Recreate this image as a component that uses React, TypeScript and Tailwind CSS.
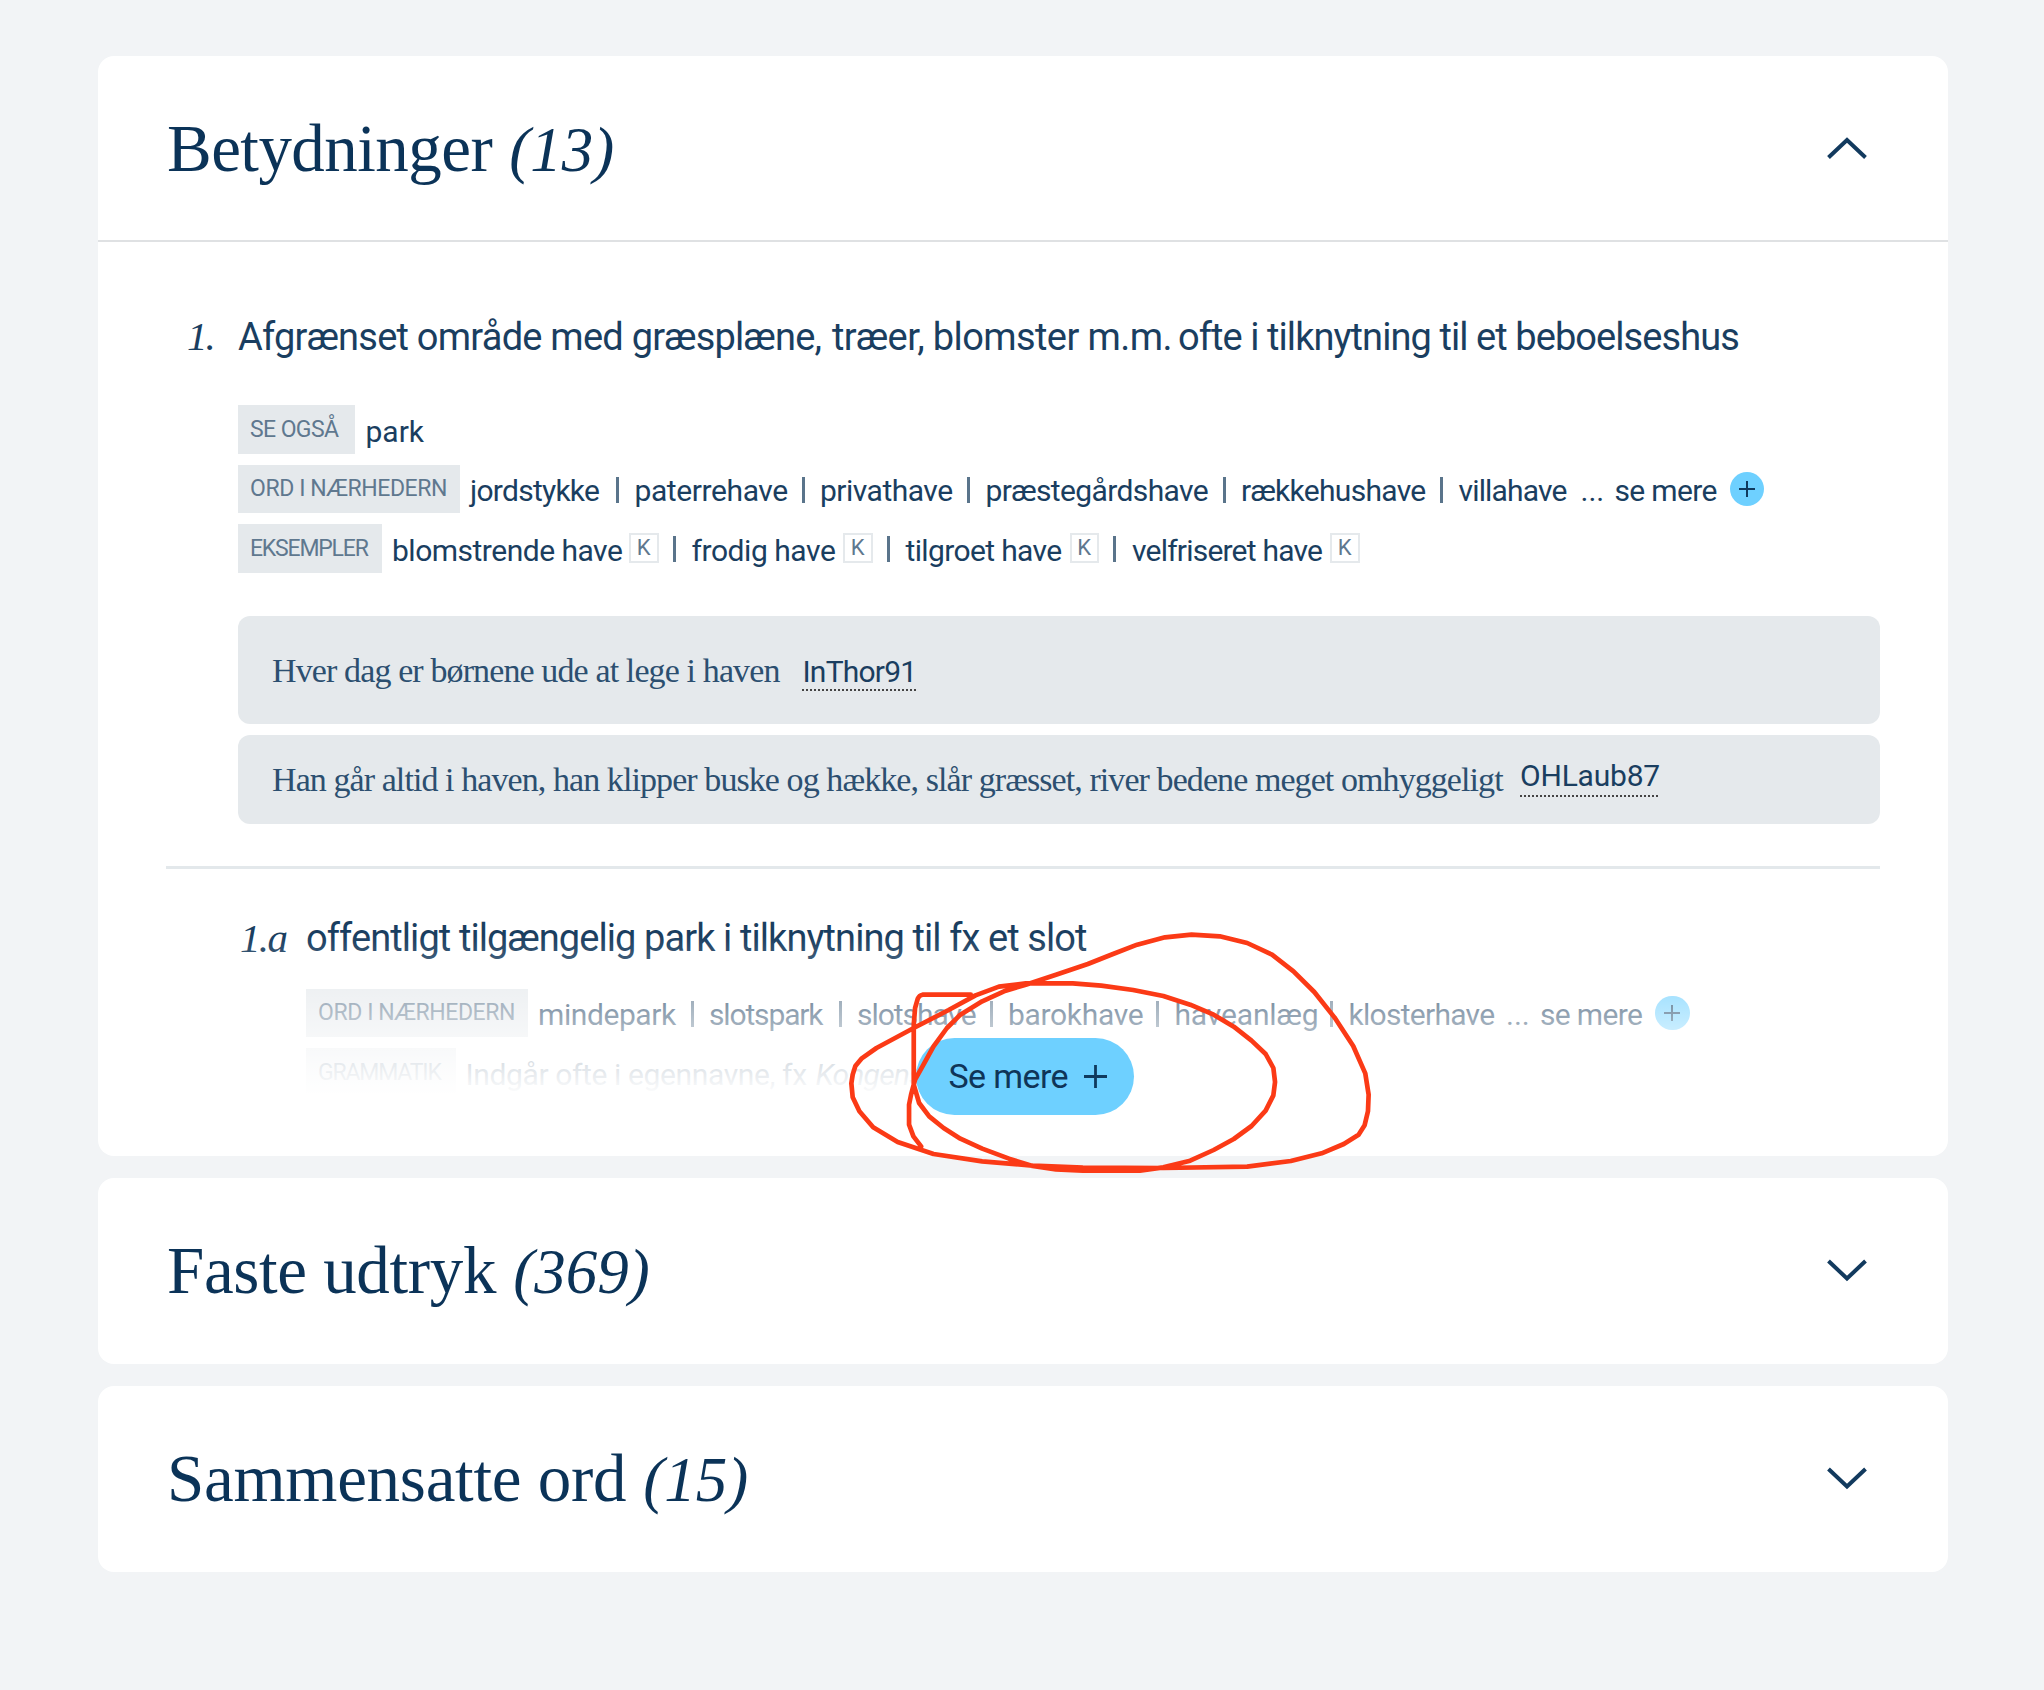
import type { ReactNode } from "react";

type Word = { text: string; cls: string };

const nearby: Word[] = [
  { text: "jordstykke", cls: "w-[130px] tracking-[-0.74px]" },
  { text: "paterrehave", cls: "w-[151px] tracking-[-0.4px]" },
  { text: "privathave", cls: "w-[131px] tracking-[-0.5px]" },
  { text: "præstegårdshave", cls: "w-[221px] tracking-[-0.62px]" },
  { text: "rækkehushave", cls: "w-[183px] tracking-[-0.7px]" },
  { text: "villahave", cls: "w-[108px] tracking-[-0.84px]" },
];

const examples: Word[] = [
  { text: "blomstrende have", cls: "w-[229px] tracking-[-0.5px]" },
  { text: "frodig have", cls: "w-[143.5px] tracking-[-0.45px]" },
  { text: "tilgroet have", cls: "w-[156px] tracking-[-0.63px]" },
  { text: "velfriseret have", cls: "w-[190px] tracking-[-0.79px]" },
];

const parks: Word[] = [
  { text: "mindepark", cls: "w-[137px] tracking-[-0.42px]" },
  { text: "slotspark", cls: "w-[114px] tracking-[-1.15px]" },
  { text: "slotshave", cls: "w-[117px] tracking-[-1.05px]" },
  { text: "barokhave", cls: "w-[132.5px] tracking-[-0.32px]" },
  { text: "haveanlæg", cls: "w-[140px] tracking-[-0.15px]" },
  { text: "klosterhave", cls: "w-[143.5px] tracking-[-0.72px]" },
];

function Chevron({ up = false }: { up?: boolean }) {
  return (
    <svg width="42" height="24" viewBox="0 0 42 24" fill="none" stroke="#123a5e" strokeWidth="4">
      <path d={up ? "M2.5 21.5 L21 4 L39.5 21.5" : "M2.5 3 L21 20.5 L39.5 3"} />
    </svg>
  );
}

function SectionHeader({ title, count, cls, open = false }: { title: string; count: string; cls: string; open?: boolean }) {
  return (
    <div className="flex h-[184.5px] items-center justify-between pr-20 pl-[69px]">
      <h2 className="flex items-baseline gap-[17px] pt-[3px] font-['Liberation_Serif',serif] text-[67px] leading-[80px] whitespace-nowrap text-[#0b3358]">
        <span className={cls}>{title}</span>
        <em className="text-[63px] leading-[80px]">{count}</em>
      </h2>
      <Chevron up={open} />
    </div>
  );
}

function Tag({ children, cls }: { children: ReactNode; cls: string }) {
  return (
    <span className={`flex h-full shrink-0 items-center bg-[#e5e9ec] pt-px text-[23px] text-[#5f788f] ${cls}`}>{children}</span>
  );
}

function Row({ children }: { children: ReactNode }) {
  return <div className="flex h-[48.5px] items-center text-[30px] leading-[44px] whitespace-nowrap">{children}</div>;
}

function Term({ word }: { word: Word }) {
  return <span className={`mt-[5px] shrink-0 ${word.cls}`}>{word.text}</span>;
}

function Bar({ cls }: { cls: string }) {
  return (
    <span className={`flex shrink-0 ${cls}`}>
      <span className="mt-0.5 h-[26px] w-[3px] bg-[#5a748b]" />
    </span>
  );
}

function CategoryBox() {
  return (
    <span className="ml-2 flex h-[30px] w-[29.5px] shrink-0 items-center justify-center border-2 border-[#e5e9ec] text-[22px] text-[#5f788f]">
      K
    </span>
  );
}

function Plus({ size, stroke }: { size: number; stroke: number }) {
  return (
    <svg width={size} height={size} viewBox={`0 0 ${size} ${size}`} stroke="#0f3a5e" strokeWidth={stroke}>
      <path d={`M0 ${size / 2} H${size} M${size / 2} 0 V${size}`} />
    </svg>
  );
}

function WordList({ words, barCls }: { words: Word[]; barCls: string }) {
  return (
    <>
      {words.map((word, i) => (
        <span key={word.text} className="flex shrink-0 items-center">
          {i > 0 && <Bar cls={barCls} />}
          <Term word={word} />
        </span>
      ))}
      <span className="mt-[5px] ml-[14px] w-[21px] shrink-0">...</span>
      <span className="mt-[5px] ml-[13px] w-[101px] shrink-0 tracking-[-0.66px]">se mere</span>
      <span className="ml-[14px] flex size-[34.5px] shrink-0 items-center justify-center rounded-full bg-[#6ed0ff]">
        <Plus size={16} stroke={2} />
      </span>
    </>
  );
}

function Annotation() {
  return (
    <svg
      className="pointer-events-none absolute top-[872px] left-[750px] z-20 overflow-visible"
      width="526"
      height="246"
      viewBox="0 0 1568 738"
      preserveAspectRatio="none"
      fill="none"
      stroke="#fb3a16"
      strokeWidth="14"
      strokeLinejoin="round"
      strokeLinecap="round"
    >
      <path d="M366 200 L222 200 Q212 202 208 212 L200 240 L196 290 L196 470 L212 525 L242 565 L285 600 L335 632 L400 662 L480 692 L550 714 L620 724 L700 728 L870 728 L940 718 L1020 698 L1090 666 L1150 633 L1203 594 L1245 548 L1268 502 L1273 462 L1268 420 L1245 378 L1203 338 L1150 296 L1090 260 L1020 230 L940 204 L850 186 L755 173 L670 166 L530 166 L450 176 L380 202 L300 246 L196 300 L85 360 L40 392 L22 414 L14 440 L10 466 L14 508 L34 550 L75 598 L148 642 L255 678 L400 700 L550 713 L700 719 L940 720 L1190 716 L1320 699 L1412 676 L1478 648 L1522 620 L1540 592 L1550 550 L1552 500 L1542 436 L1506 354 L1450 268 L1390 192 L1328 130 L1264 80 L1190 45 L1108 25 L1024 20 L945 28 L862 50 L790 78 L715 108 L620 140 L530 170 L465 190 L400 220 L335 260 L295 300 L255 355 L225 410 L200 455 L188 500 L182 530 L182 590 L195 625 L218 655" />
    </svg>
  );
}

export default function App() {
  return (
    <main className="flex h-[1690px] w-[2044px] flex-col gap-[22px] bg-[#f2f4f6] pt-[55.5px] pl-[98px] font-['Roboto',sans-serif] text-[#1a3e60]">
      <section className="relative h-[1100px] w-[1850px] rounded-2xl bg-white">
        <SectionHeader title="Betydninger" count="(13)" cls="tracking-[-0.55px]" open />
        <div className="h-[853px] overflow-hidden border-t-2 border-[#dfe1e3] pt-[70px] pr-[68px] pl-[68px]">
          <div className="flex h-[50px] items-center whitespace-nowrap">
            <em className="ml-[21px] w-[51px] shrink-0 font-['Liberation_Serif',serif] text-[41px] tracking-[-2px]">1.</em>
            <h3 className="flex text-[38px]">
              <span className="w-[594px] tracking-[-0.76px]">Afgrænset område med græsplæne, </span>
              <span className="w-[346px] tracking-[-0.6px]">træer, blomster m.m. </span>
              <span className="tracking-[-0.93px]">ofte i tilknytning til et beboelseshus</span>
            </h3>
          </div>
          <div className="mt-[43px] ml-[72px] flex flex-col gap-[11px]">
            <Row>
              <Tag cls="w-[116.5px] pl-3 tracking-[-0.6px]">SE OGSÅ</Tag>
              <span className="mt-[5px] ml-[11px]">park</span>
            </Row>
            <Row>
              <Tag cls="mr-2.5 w-[222px] pl-3 tracking-[-0.4px]">ORD I NÆRHEDERN</Tag>
              <WordList words={nearby} barCls="w-[34.5px] pl-[16px]" />
            </Row>
            <Row>
              <Tag cls="mr-2.5 w-[144px] pl-3 tracking-[-1.2px]">EKSEMPLER</Tag>
              {examples.map((word, i) => (
                <span key={word.text} className="flex shrink-0 items-center">
                  {i > 0 && <Bar cls="w-[33px] pl-[14px]" />}
                  <Term word={word} />
                  <CategoryBox />
                </span>
              ))}
            </Row>
          </div>
          <div className="mt-[43px] ml-[72px] flex flex-col gap-[10.5px] font-['Liberation_Serif',serif] text-[34px] whitespace-nowrap text-[#2c4f70]">
            <div className="flex h-[108.5px] items-center rounded-xl bg-[#e5e9ec] pl-[34px]">
              <span className="mt-px w-[529.5px] tracking-[-0.88px]">Hver dag er børnene ude at lege i haven</span>
              <a className="mt-[7px] w-[114px] border-b-2 border-dotted border-[#444] pl-px font-['Roboto',sans-serif] text-[30px] leading-[34px] tracking-[-0.8px] text-[#1a3e60]">
                InThor91
              </a>
            </div>
            <div className="flex h-[89px] items-center rounded-xl bg-[#e5e9ec] pl-[34px]">
              <span className="mt-px w-[1248px] tracking-[-0.92px]">
                Han går altid i haven, han klipper buske og hække, slår græsset, river bedene meget omhyggeligt
              </span>
              <a className="-mt-[3px] w-[138px] border-b-2 border-dotted border-[#444] pt-px pb-[2px] font-['Roboto',sans-serif] text-[30px] leading-[34px] tracking-[-0.2px] text-[#1a3e60]">
                OHLaub87
              </a>
            </div>
          </div>
          <hr className="mt-[42px] border-t-[3.5px] border-[#e3e8eb]" />
          <div className="mt-[45px] ml-[74px] flex h-[50px] items-center whitespace-nowrap">
            <em className="w-[66px] shrink-0 font-['Liberation_Serif',serif] text-[41px] tracking-[-1.63px]">1.a</em>
            <h3 className="text-[38px] tracking-[-0.91px]">offentligt tilgængelig park i tilknytning til fx et slot</h3>
          </div>
          <div className="mt-[25px] ml-[140px] flex flex-col gap-[11px]">
            <Row>
              <Tag cls="mr-2.5 w-[222px] pl-3 tracking-[-0.4px]">ORD I NÆRHEDERN</Tag>
              <WordList words={parks} barCls="w-[34px] pl-[15.5px]" />
            </Row>
            <Row>
              <Tag cls="mr-2.5 w-[149.5px] pl-3 tracking-[-1.17px]">GRAMMATIK</Tag>
              <span className="mt-1.5 w-[350px] shrink-0 tracking-[-0.38px]">Indgår ofte i egennavne, fx</span>
              <em className="mt-1.5 tracking-[-0.8px]">Kongens</em>
            </Row>
          </div>
        </div>
        <div className="absolute inset-x-0 top-[880px] h-[160px] bg-linear-to-b from-white/0 via-white/85 via-80% to-white" />
        <button className="absolute top-[982px] left-[817.5px] z-10 flex h-[77px] w-[218.5px] items-center rounded-full bg-[#6ed0ff] pl-[33px] text-[34px] tracking-[-0.62px] text-[#0f3558]">
          <span className="w-[135px] text-left">Se mere</span>
          <Plus size={23} stroke={2.8} />
        </button>
        <Annotation />
      </section>
      <section className="h-[186px] w-[1850px] rounded-2xl bg-white">
        <SectionHeader title="Faste udtryk" count="(369)" cls="tracking-[-0.33px]" />
      </section>
      <section className="h-[186px] w-[1850px] rounded-2xl bg-white">
        <SectionHeader title="Sammensatte ord" count="(15)" cls="tracking-[-0.27px]" />
      </section>
    </main>
  );
}
